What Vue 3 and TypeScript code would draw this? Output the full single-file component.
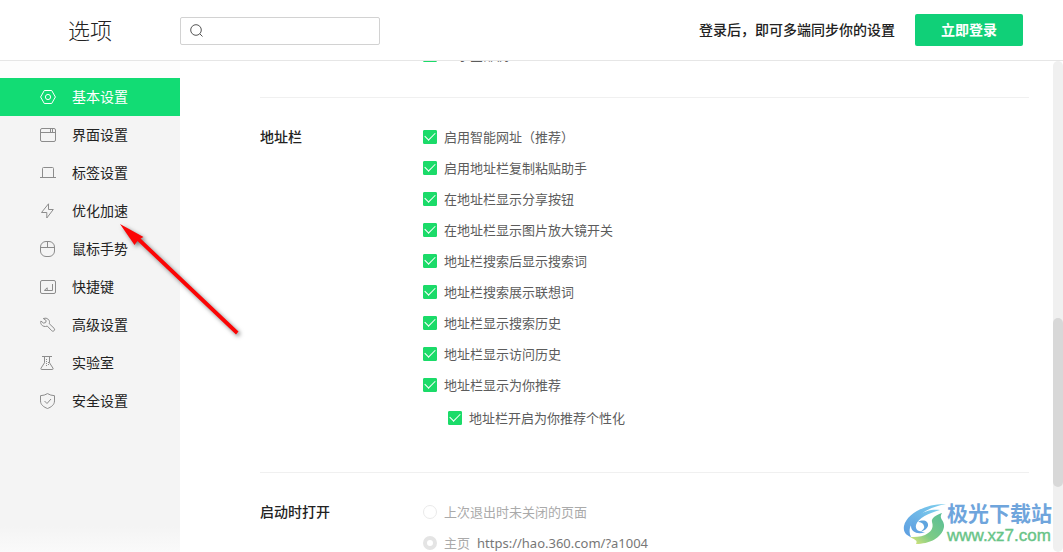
<script setup lang="ts">
import { ref } from 'vue'

interface NavItem {
  id: string
  label: string
}
interface Option {
  id: string
  label: string
  checked: boolean
  nested?: boolean
}

const nav: NavItem[] = [
  { id: 'basic', label: '基本设置' },
  { id: 'interface', label: '界面设置' },
  { id: 'tabs', label: '标签设置' },
  { id: 'speed', label: '优化加速' },
  { id: 'gesture', label: '鼠标手势' },
  { id: 'shortcut', label: '快捷键' },
  { id: 'advanced', label: '高级设置' },
  { id: 'lab', label: '实验室' },
  { id: 'security', label: '安全设置' },
]
const active = ref('basic')
const query = ref('')
const sidePanel = ref(true)
const startup = ref('home')

const options = ref<Option[]>([
  { id: 'smart', label: '启用智能网址（推荐）', checked: true },
  { id: 'paste', label: '启用地址栏复制粘贴助手', checked: true },
  { id: 'share', label: '在地址栏显示分享按钮', checked: true },
  { id: 'zoom', label: '在地址栏显示图片放大镜开关', checked: true },
  { id: 'word', label: '地址栏搜索后显示搜索词', checked: true },
  { id: 'suggest', label: '地址栏搜索展示联想词', checked: true },
  { id: 'search-history', label: '地址栏显示搜索历史', checked: true },
  { id: 'visit-history', label: '地址栏显示访问历史', checked: true },
  { id: 'recommend', label: '地址栏显示为你推荐', checked: true },
  { id: 'personal', label: '地址栏开启为你推荐个性化', checked: true, nested: true },
])
</script>

<template>
  <div class="page">
    <header class="header">
      <h1 class="title">选项</h1>
      <label class="search">
        <svg class="search-icon" viewBox="0 0 14 14" aria-hidden="true">
          <circle cx="6" cy="6" r="5.3" />
          <path d="M9.800 9.800 12.500 12.500" />
        </svg>
        <input v-model="query" type="text" aria-label="搜索" />
      </label>
      <p class="hint">登录后，即可多端同步你的设置</p>
      <button class="login" type="button">立即登录</button>
    </header>

    <div class="body">
      <nav class="sidebar">
        <a
          v-for="item in nav"
          :key="item.id"
          href="#"
          class="nav-item"
          :class="{ active: item.id === active }"
          @click.prevent="active = item.id"
        >
          <svg class="nav-icon" viewBox="0 0 16 16" aria-hidden="true">
            <g v-if="item.id === 'basic'">
              <path d="M4.3 1.5h7.4L15.4 8l-3.7 6.5H4.3L.6 8z" />
              <circle cx="8" cy="8" r="2.6" />
            </g>
            <g v-else-if="item.id === 'interface'">
              <rect x=".5" y="1.500" width="15" height="13" rx="1.5" />
              <path d="M.5 5.5h15M10.5 2v3M12.5 2v3" />
            </g>
            <path
              v-else-if="item.id === 'tabs'"
              d="M0 12.5h16M2.5 12.5v-9q0-1 1-1h9q1 0 1 1v9"
            />
            <path v-else-if="item.id === 'speed'" d="M8.5.8v5.7h4.8L6.8 15V9.5H1.5z" />
            <g v-else-if="item.id === 'gesture'">
              <rect x=".5" y=".5" width="14" height="15" rx="5.5" />
              <path d="M.5 6.5h14M7.5.5v6" />
            </g>
            <g v-else-if="item.id === 'shortcut'">
              <rect x=".5" y="1.5" width="15" height="13" rx="1.5" />
              <path d="M12.5 5v6.5h-8M4.2 11.5l3-2.7v2.7" />
            </g>
            <path
              v-else-if="item.id === 'advanced'"
              d="M3.300 1.500Q6.300.300 8.400 2.400c1.200 1.300 1.400 2.800.8 4.200l4.900 4.700c1.600 1.600-.8 4-2.400 2.400L7.300 9.100C5 10 2.500 9.400 1.300 7.400.6 6.200.5 5.100.9 4l2.600 2.100 2.100-.5.6-2z"
            />
            <g v-else-if="item.id === 'lab'">
              <path d="M2 1.500h10M4.500 1.500v6.300L1 13.200q-.5 1.300.7 1.300h10.600q1.200 0 .7-1.300L9.500 7.800V1.500" />
              <path class="dots" d="M6.500 4v7M8.500 7v4" />
            </g>
            <g v-else>
              <path d="M7.5.6Q10.5 2.5 14.5 2.7v5.2c0 4-3.5 6.3-7 7.6-3.5-1.3-7-3.6-7-7.600V2.700Q4.500 2.500 7.500.600z" />
              <path d="m4.500 8 2.500 2.500L11 6" />
            </g>
          </svg>
          <span class="nav-label">{{ item.label }}</span>
        </a>
      </nav>

      <main class="content">
        <div class="clipped">
          <label class="option">
            <input v-model="sidePanel" type="checkbox" class="check" />
            <span>显示全部例</span>
          </label>
        </div>

        <section class="section">
          <h2 class="section-title">地址栏</h2>
          <div class="options">
            <label
              v-for="option in options"
              :key="option.id"
              class="option"
              :class="{ nested: option.nested }"
            >
              <input v-model="option.checked" type="checkbox" class="check" />
              <span>{{ option.label }}</span>
            </label>
          </div>
        </section>

        <section class="section">
          <h2 class="section-title">启动时打开</h2>
          <div class="options">
            <label class="option disabled">
              <input v-model="startup" type="radio" name="startup" value="last" class="radio" disabled />
              <span>上次退出时未关闭的页面</span>
            </label>
            <label class="option disabled">
              <input v-model="startup" type="radio" name="startup" value="home" class="radio" disabled />
              <span>主页</span>
              <span class="url">https://hao.360.com/?a1004</span>
            </label>
          </div>
        </section>
      </main>

      <div class="scrollbar" aria-hidden="true">
        <div class="thumb"></div>
      </div>
    </div>

    <svg class="arrow" viewBox="0 0 140 130" aria-hidden="true">
      <path d="M10 14 33.500 27 30.500 28.500 128.500 121.500 126 124.500 27.500 31 24.500 35z" />
    </svg>

    <div class="watermark">
      <svg class="swirl" viewBox="0 0 44 42" aria-hidden="true">
        <defs>
          <linearGradient id="swirl-blue" x1="1" y1="0" x2="0" y2="1">
            <stop offset="0" stop-color="#7fd0ee" />
            <stop offset="1" stop-color="#5d9de0" />
          </linearGradient>
          <linearGradient id="swirl-green" x1="1" y1="0" x2="0" y2="1">
            <stop offset="0" stop-color="#58bd98" />
            <stop offset=".6" stop-color="#7dcc86" />
            <stop offset="1" stop-color="#e4e77a" />
          </linearGradient>
        </defs>
        <path fill="url(#swirl-blue)" d="M43 1C27 0 4 9 1 23c-1 6 2 9 7 11-4-8 1-16 9-22C24 6 33 3 43 1z" />
        <path fill="url(#swirl-blue)" d="M37 7C23 5 8 14 8 23c0 6 7 9 14 6-6 0-10-2-9-7 2-7 13-12 24-15z" />
        <path fill="#5fa5df" d="M15 19c5-3 11-1 10 4-1 3-4 5-8 6 3-2 5-4 4-6-1-3-3-4-6-4z" />
        <path fill="url(#swirl-green)" d="M39 10c-6 2-11 5-10 9 2 6-1 10-7 13-5 2-10 2-15 2 5 3 8 3 6 7 13 0 26-6 28-17 1-7-6-8-2-14z" />
      </svg>
      <div class="brand">
        <span class="brand-name">极光下载站</span>
        <span class="brand-url">www.xz7.com</span>
      </div>
    </div>
  </div>
</template>

<style>
body {
  margin: 0;
  background: #fff;
}
</style>

<style scoped>
.page {
  position: relative;
  display: flex;
  flex-direction: column;
  height: 100vh;
  overflow: hidden;
  font-family: "Noto Sans", "Noto Sans CJK SC", sans-serif;
  font-size: 14px;
  color: #222;
}
.header {
  display: flex;
  flex: none;
  align-items: center;
  height: 60px;
  padding: 0 40px 0 68px;
  border-bottom: 1px solid #e6e6e6;
}
.title {
  width: 112px;
  margin: 0;
  font-size: 22px;
  font-weight: 300;
  line-height: 32px;
}
.search {
  display: flex;
  box-sizing: border-box;
  align-items: center;
  gap: 8px;
  width: 200px;
  height: 28px;
  margin-top: 2px;
  padding: 0 9px;
  border: 1px solid #d2d2d2;
  border-radius: 2px;
}
.search-icon {
  flex: none;
  width: 14px;
  height: 14px;
  fill: none;
  stroke: #555;
  stroke-width: 1;
}
.search input {
  flex: 1;
  min-width: 0;
  padding: 0;
  border: 0;
  outline: 0;
  background: none;
  font: inherit;
}
.hint {
  margin: 0 20px 0 auto;
  padding-bottom: 2px;
  font-weight: 500;
}
.login {
  width: 108px;
  height: 32px;
  padding: 0 0 2px;
  border: 0;
  border-radius: 2px;
  background: #10d078;
  color: #fff;
  font: inherit;
  font-weight: 700;
}
.body {
  display: flex;
  flex: 1;
  min-height: 0;
}
.sidebar {
  box-sizing: border-box;
  flex: none;
  width: 180px;
  padding-top: 17px;
  background: linear-gradient(#fdfdfd 17px, #f4f4f4 17px, #f4f4f4 calc(100% - 26px), #fafafa);
}
.nav-item {
  display: flex;
  align-items: center;
  gap: 16px;
  height: 38px;
  padding-left: 40px;
  color: #222;
  text-decoration: none;
}
.nav-item.active {
  background: #12dc74;
  color: #fff;
}
.nav-label {
  padding-bottom: 2px;
}
.nav-icon {
  width: 16px;
  height: 16px;
  fill: none;
  stroke: #8c8c8c;
  stroke-width: 1;
}
.active .nav-icon {
  stroke: #fff;
}
.dots {
  stroke-dasharray: 1 1;
}
.content {
  flex: 1;
  min-width: 0;
  padding: 0 24px 0 80px;
}
.clipped {
  display: flex;
  align-items: flex-start;
  height: 36px;
  padding-left: 163px;
  overflow: hidden;
}
.clipped .option {
  margin-top: -22px;
}
.section {
  display: flex;
  padding: 23px 0 37px;
  border-top: 1px solid #f0f0f0;
}
.section-title {
  flex: none;
  width: 163px;
  margin: 0;
  font-size: 14px;
  font-weight: 500;
  line-height: 31px;
}
.option {
  display: flex;
  align-items: center;
  height: 31px;
  gap: 7px;
  font-size: 13px;
  color: #5c5c5c;
}
.option.nested {
  height: 35px;
  padding-left: 25px;
}
.option.disabled {
  color: #aaa;
}
.url {
  color: #777;
}
.check,
.radio {
  flex: none;
  box-sizing: border-box;
  width: 14px;
  height: 14px;
  margin: 0;
  appearance: none;
}
.check {
  display: grid;
  place-items: center;
  border: 1px solid #ccc;
  border-radius: 1px;
}
.check:checked {
  border-color: #1bdb69;
  background: #1bdb69;
}
.check:checked::before {
  content: "";
  box-sizing: border-box;
  width: 10px;
  height: 6px;
  margin-bottom: 3px;
  border: solid #fff;
  border-width: 0 0 1px 1px;
  transform: rotate(-45deg);
}
.radio {
  border: 1px solid #eaeaea;
  border-radius: 50%;
}
.radio:checked {
  border: 4px solid #e4e4e4;
}
.scrollbar {
  display: flex;
  flex: none;
  flex-direction: column;
  width: 10px;
  border-radius: 5px;
  background: #f0f0f0;
}
.scrollbar::before {
  content: "";
  flex: 257;
}
.scrollbar::after {
  content: "";
  flex: 65;
}
.thumb {
  flex: 169;
  border-radius: 5px;
  background: #d8d8d8;
}
.arrow {
  position: absolute;
  top: 210px;
  left: 110px;
  width: 140px;
  height: 130px;
  fill: #fb0505;
  filter: drop-shadow(2px 2px 2px rgba(0, 0, 0, 0.5));
  pointer-events: none;
}
.watermark {
  position: absolute;
  right: 11px;
  bottom: 6px;
  display: flex;
  align-items: center;
  pointer-events: none;
}
.swirl {
  width: 44px;
  height: 42px;
}
.brand {
  display: flex;
  flex-direction: column;
  font-family: "Liberation Sans", "Noto Sans CJK SC", sans-serif;
}
.brand-name {
  color: #6fa5dc;
  font-size: 21px;
  font-weight: 700;
  line-height: 24px;
}
.brand-url {
  color: #68c487;
  font-size: 17px;
  line-height: 20px;
  -webkit-text-stroke: 0.4px #68c487;
}
</style>
